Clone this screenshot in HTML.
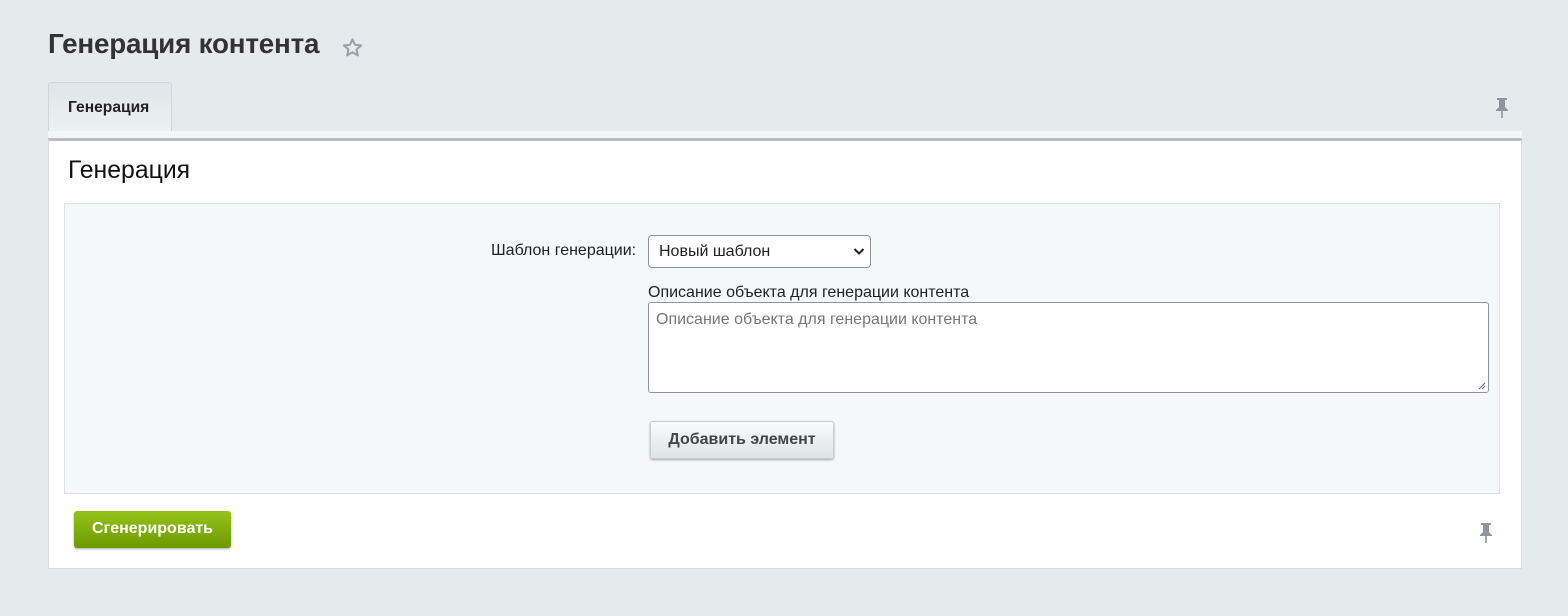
<!DOCTYPE html>
<html><head><meta charset="utf-8"><style>
*{box-sizing:border-box;margin:0;padding:0}
body{width:1568px;height:616px;background:#e5eaec;font-family:"Liberation Sans",sans-serif;position:relative;overflow:hidden}
.abs{position:absolute}
h1{position:absolute;left:48px;top:28px;font-size:27.8px;font-weight:bold;color:#333;letter-spacing:-0.2px}
.tab{left:48px;top:82px;width:124px;height:52px;background:linear-gradient(#dfe5e8,#eef2f3);border:1px solid #cfd6d9;border-bottom:none;border-radius:3px 3px 0 0;font-size:15.6px;font-weight:bold;color:#222;padding-top:16px;padding-left:19px}
.strip{left:48px;top:131px;width:1474px;height:7px;background:#f3f6f7}
.panel{left:48px;top:138px;width:1474px;height:431px;background:#fff;border:1px solid #d5dbde;border-top:3px solid #b6bcbf}
.inner{left:64px;top:203px;width:1436px;height:291px;background:#f5f8f9;border:1px solid #dce3e6}
.lbl{font-size:16px;color:#222}
.sel{left:648px;top:235px;width:223px;height:33px;border:1px solid #8f9497;border-radius:4px;background:#fff;font-size:16px;color:#222;padding:7px 0 0 10px}
.ta{left:648px;top:302px;width:841px;height:91px;border:1px solid #8f9497;border-radius:3px;background:#fff;font-size:16px;color:#777;padding:8px 0 0 7px}
.btn{left:650px;top:421px;width:184px;height:38px;border-radius:3px;background:linear-gradient(#fafbfb,#dde3e6);box-shadow:0 1px 2px rgba(0,0,0,.35);border:1px solid #c8cfd2;font-family:"Liberation Sans Narrow","Liberation Sans",sans-serif;font-weight:bold;font-size:16px;color:#444;text-align:center;line-height:35px}
.gbtn{left:74px;top:511px;width:157px;height:37px;border-radius:3px;background:linear-gradient(#97c21a,#6c9a00);box-shadow:0 1px 2px rgba(0,0,0,.35);font-family:"Liberation Sans Narrow","Liberation Sans",sans-serif;font-weight:bold;font-size:16px;color:#fff;text-align:center;line-height:35px}
</style></head><body>
<h1>Генерация контента</h1>
<svg class="abs" style="left:341px;top:37px" width="23" height="22" viewBox="0 0 24 24"><path d="M12 2.5l2.8 6.1 6.6.6-5 4.4 1.5 6.5L12 16.7l-5.9 3.4 1.5-6.5-5-4.4 6.6-.6z" fill="none" stroke="#9aa1a8" stroke-width="2.2" stroke-linejoin="round"/></svg>
<div class="abs tab">Генерация</div>
<div class="abs strip"></div>
<svg class="abs" style="left:1494px;top:97px" width="16" height="22" viewBox="0 0 16 22"><path d="M3 1h10v2h-2v7l3 3v1H2v-1l3-3V3H3z" fill="#8e969b"/><rect x="7.2" y="14" width="1.6" height="7" fill="#8e969b"/></svg>
<div class="abs panel"></div>
<div class="abs" style="left:68px;top:157px;font-size:24.8px;color:#111">Генерация</div>
<div class="abs inner"></div>
<div class="abs lbl" style="left:491px;top:242px">Шаблон генерации:</div>
<div class="abs sel">Новый шаблон<svg class="abs" style="right:5px;top:11px" width="12" height="9" viewBox="0 0 12 9"><path d="M1.5 2l4.5 4.5L10.5 2" fill="none" stroke="#222" stroke-width="2"/></svg></div>
<div class="abs lbl" style="left:648px;top:284px">Описание объекта для генерации контента</div>
<div class="abs ta">Описание объекта для генерации контента<svg class="abs" style="right:2px;bottom:2px" width="9" height="9"><path d="M8 2L2 8M8 5L5 8" stroke="#666"/></svg></div>
<div class="abs btn">Добавить элемент</div>
<div class="abs gbtn">Сгенерировать</div>
<svg class="abs" style="left:1478px;top:522px" width="16" height="22" viewBox="0 0 16 22"><path d="M3 1h10v2h-2v7l3 3v1H2v-1l3-3V3H3z" fill="#8e969b"/><rect x="7.2" y="14" width="1.6" height="7" fill="#8e969b"/></svg>
</body></html>
